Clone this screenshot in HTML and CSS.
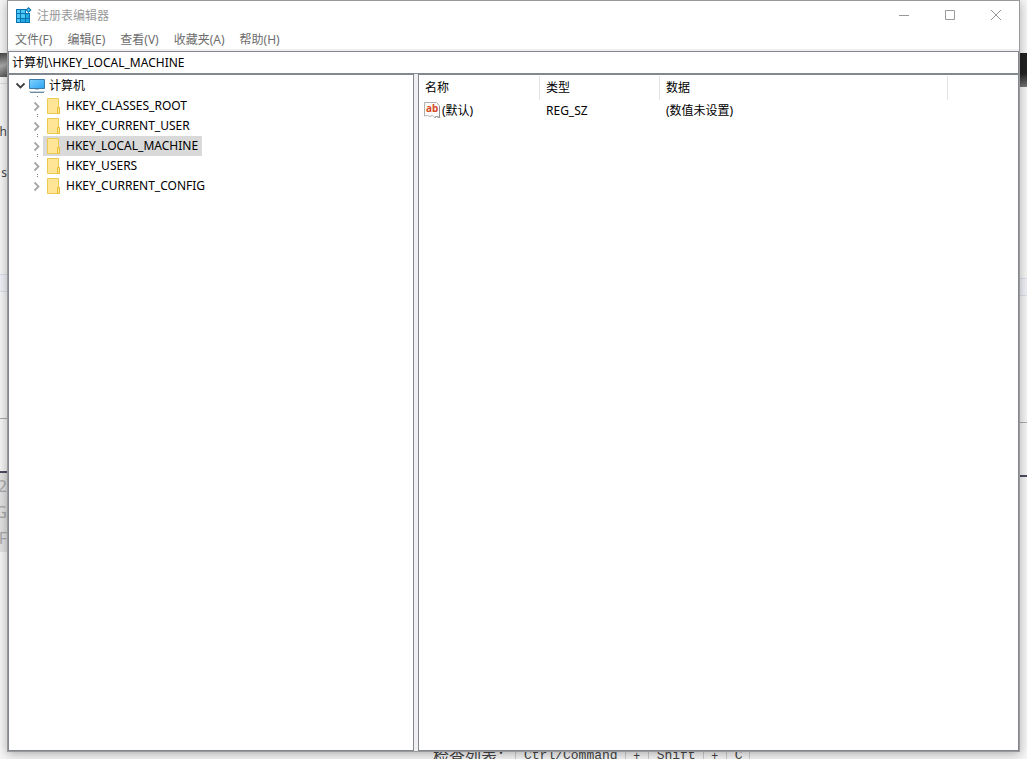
FILE: index.html
```html
<!DOCTYPE html>
<html lang="zh-CN">
<head>
    <meta charset="UTF-8">
    <meta name="viewport" content="width=device-width, initial-scale=1.0">
    <title>注册表编辑器</title>
    <link rel="stylesheet" href="styles.css">
</head>
<body>
    <div class="desktop">
        <div class="edge edge-left">
            <div class="photo"></div>
            <div class="page-top"></div>
            <div class="page-text"><span>.h</span><span>s</span></div>
            <div class="band"></div>
            <div class="page-gap"></div>
            <div class="page-foot"></div>
            <div class="lines"><span>2</span><span>G</span><span>FF</span></div>
        </div>

        <main class="window">
            <header class="titlebar">
                <svg class="app-icon" width="16" height="16" viewBox="0 0 16 16">
                    <path fill="#0873b0" d="M0 2h10v4h4v10H0z"/>
                    <path fill="#4cc8f5" d="M1 3h3v3H1zM5 3h4v3H5zM1 7h3v4H1zM5 7h4v4H5zM1 12h3v3H1z"/>
                    <path fill="#23a9e1" d="M10 7h3v4h-3zM5 12h4v3H5zM10 12h3v3h-3z"/>
                    <path fill="#0873b0" d="M12.500 0l3 3-3 3-3-3z"/>
                    <path fill="#4cc8f5" d="M12.500 1.500L14 3l-1.500 1.500L11 3z"/>
                </svg>
                <h1>注册表编辑器</h1>
                <div class="controls">
                    <button type="button" aria-label="最小化"><svg width="10" height="10"><path d="M0 5.500h10"/></svg></button>
                    <button type="button" aria-label="最大化"><svg width="10" height="10"><path d="M.5.5h9v9h-9z"/></svg></button>
                    <button type="button" aria-label="关闭"><svg width="10" height="10"><path d="M0 0l10 10M10 0L0 10"/></svg></button>
                </div>
            </header>

            <nav class="menu">
                <button type="button">文件(F)</button>
                <button type="button">编辑(E)</button>
                <button type="button">查看(V)</button>
                <button type="button">收藏夹(A)</button>
                <button type="button">帮助(H)</button>
            </nav>

            <input class="address" type="text" aria-label="地址" value="计算机\HKEY_LOCAL_MACHINE">

            <!-- 图标定义 -->
            <svg class="defs" width="0" height="0">
                <symbol id="closed" viewBox="0 0 14 20">
                    <path fill="none" stroke="#a6a6a6" stroke-width="1.800" d="M5.500 6.500l4 4-4 4"/>
                    <path fill="#777" d="M8 0h1v1H8zM8 18h1v1H8z"/>
                </symbol>
                <symbol id="closed-last" viewBox="0 0 14 20">
                    <path fill="none" stroke="#a6a6a6" stroke-width="1.800" d="M5.500 6.500l4 4-4 4"/>
                    <path fill="#777" d="M8 0h1v1H8z"/>
                </symbol>
                <symbol id="folder" viewBox="0 0 16 16">
                    <path fill="#ffe595" stroke="#ecc94f" d="M.5.5h11v9h1v6H.5z"/>
                    <path fill="#ffe595" stroke="#e8bd38" d="M10.500 9.500h2v6h-2z"/>
                </symbol>
            </svg>

            <div class="panes">
                <section class="tree">
                    <div class="row">
                        <button class="toggle" type="button" aria-label="折叠"><svg width="14" height="20" viewBox="0 0 14 20"><path fill="none" stroke="#404040" stroke-width="1.800" d="M3.500 7.500l4 4 4-4"/></svg></button>
                        <button class="key root" type="button">
                            <svg width="16" height="16" viewBox="0 0 16 16">
                                <defs><linearGradient id="screen" x2="1" y2="1"><stop stop-color="#83d3ff"/><stop offset="1" stop-color="#29a3f3"/></linearGradient></defs>
                                <path fill="url(#screen)" stroke="#3f7ca5" d="M.5 1.500h15v9H.5z"/>
                                <path fill="#b7c9d6" d="M6 11h4v1H6z"/>
                                <path fill="#6c8ba0" d="M1 14h14v1H1z"/>
                                <path fill="#c9d5dd" d="M0 13h16v1H0z"/>
                            </svg>
                            <span>计算机</span>
                        </button>
                    </div>
                    <ul class="keys">
                        <li class="row">
                            <button class="toggle" type="button" aria-label="展开"><svg width="14" height="20"><use href="#closed"/></svg></button>
                            <button class="key" type="button"><svg width="16" height="16"><use href="#folder"/></svg><span>HKEY_CLASSES_ROOT</span></button>
                        </li>
                        <li class="row">
                            <button class="toggle" type="button" aria-label="展开"><svg width="14" height="20"><use href="#closed"/></svg></button>
                            <button class="key" type="button"><svg width="16" height="16"><use href="#folder"/></svg><span>HKEY_CURRENT_USER</span></button>
                        </li>
                        <li class="row">
                            <button class="toggle" type="button" aria-label="展开"><svg width="14" height="20"><use href="#closed"/></svg></button>
                            <button class="key selected" type="button"><svg width="16" height="16"><use href="#folder"/></svg><span>HKEY_LOCAL_MACHINE</span></button>
                        </li>
                        <li class="row">
                            <button class="toggle" type="button" aria-label="展开"><svg width="14" height="20"><use href="#closed"/></svg></button>
                            <button class="key" type="button"><svg width="16" height="16"><use href="#folder"/></svg><span>HKEY_USERS</span></button>
                        </li>
                        <li class="row">
                            <button class="toggle" type="button" aria-label="展开"><svg width="14" height="20"><use href="#closed-last"/></svg></button>
                            <button class="key" type="button"><svg width="16" height="16"><use href="#folder"/></svg><span>HKEY_CURRENT_CONFIG</span></button>
                        </li>
                    </ul>
                </section>

                <section class="values">
                    <table>
                        <colgroup><col class="col-name"><col class="col-type"><col class="col-data"></colgroup>
                        <thead>
                            <tr><th>名称</th><th>类型</th><th>数据</th></tr>
                        </thead>
                        <tbody>
                            <tr>
                                <td>
                                    <div class="name">
                                        <svg width="16" height="16" viewBox="0 0 16 16">
                                            <path fill="#fafafa" stroke="#b0b0b0" d="M.5.5h12l3 3v12l-3-1-2 1-2-2-3 1-2-1-3 .5z"/>
                                            <path fill="none" stroke="#909090" d="M15.500 4v11.500l-3-1-2 1"/>
                                            <text class="ab" x="2" y="10">ab</text>
                                        </svg>
                                        (默认)
                                    </div>
                                </td>
                                <td>REG_SZ</td>
                                <td>(数值未设置)</td>
                            </tr>
                        </tbody>
                    </table>
                </section>
            </div>
        </main>

        <div class="edge edge-right">
            <div class="photo"></div>
            <div class="page-top"></div>
            <div class="band"></div>
            <div class="page-gap"></div>
            <div class="page-foot"></div>
        </div>

        <div class="edge-bottom">
            <span class="hint">检查列表：</span>
            <kbd>Ctrl/Command</kbd><span class="plus">+</span><kbd>Shift</kbd><span class="plus">+</span><kbd>C</kbd>
        </div>
    </div>
</body>
</html>
```

FILE: styles.css
```css
* {
    box-sizing: border-box;
}

body {
    margin: 0;
    font-family: "Noto Sans", "Noto Sans CJK SC", sans-serif;
    font-size: 12px;
    color: #000;
    overflow: hidden;
}

button,
input {
    font: inherit;
    color: inherit;
    border: none;
    background: none;
    padding: 0;
    margin: 0;
}

svg {
    display: block;
    flex: none;
}

.desktop {
    display: grid;
    grid-template-columns: 7px 1fr 7px;
    grid-template-rows: 1fr 7px;
    height: 100vh;
    background: #f6f6f6;
}

/* 窗口 */
.window {
    position: relative;
    z-index: 1;
    display: flex;
    flex-direction: column;
    min-width: 0;
    background: #fff;
    border: 1px solid #999;
    box-shadow: 0 2px 10px rgba(0, 0, 0, 0.3);
}

.titlebar {
    display: flex;
    align-items: center;
    height: 28px;
    padding-left: 8px;
    color: #999;
}

.titlebar h1 {
    flex: 1;
    margin: 0 0 0 5px;
    font-size: 12px;
    font-weight: normal;
}

.controls {
    display: flex;
}

.controls button {
    display: flex;
    align-items: center;
    justify-content: center;
    width: 46px;
    height: 28px;
}

.controls path {
    fill: none;
    stroke: #999;
}

.menu {
    display: flex;
    gap: 15px;
    height: 22px;
    padding-left: 7px;
    color: #6d6d6d;
    border-bottom: 2px solid #f0f0f0;
}

.address {
    width: 100%;
    height: 23px;
    padding: 0 3px 2px;
    border: 1px solid #828790;
}

.defs {
    position: absolute;
}

.panes {
    flex: 1;
    display: grid;
    grid-template-columns: 406px 1fr;
    gap: 4px;
    min-height: 0;
    background: #f0f0f0;
}

.tree,
.values {
    background: #fff;
    border: 1px solid #828790;
    padding-top: 1px;
    overflow: hidden;
}

/* 左侧树 */
.tree {
    padding-left: 4px;
}

.keys {
    list-style: none;
    margin: 0;
    padding: 0 0 0 16px;
}

.row {
    display: flex;
    height: 20px;
}

.key {
    display: flex;
    align-items: center;
    gap: 3px;
    height: 20px;
    padding: 0 4px;
}

.key span {
    padding-bottom: 2px;
}

.key.root {
    padding-left: 2px;
    gap: 4px;
}

.key.selected {
    background: #d9d9d9;
}

/* 右侧列表 */
table {
    table-layout: fixed;
    width: 529px;
    border-collapse: separate;
    border-spacing: 0;
}

.col-name {
    width: 121px;
}

.col-type {
    width: 120px;
}

.col-data {
    width: 288px;
}

th,
td {
    padding: 0 6px 2px;
    text-align: left;
    font-weight: normal;
}

th {
    height: 24px;
    border-right: 1px solid #e5e5e5;
}

td {
    height: 22px;
}

.name {
    display: flex;
    align-items: center;
    gap: 2px;
    margin-left: -1px;
}

.ab {
    font: bold 10px "Noto Sans", sans-serif;
    fill: #d64a26;
}

/* 窗口后面露出的网页 */
.edge {
    display: flex;
    flex-direction: column;
    overflow: hidden;
}

.photo {
    height: 24px;
    margin-top: 53px;
    background: linear-gradient(160deg, #444, #aaa 50%, #555);
}

.edge-right .photo {
    height: 34px;
    background: linear-gradient(#222 60%, #777);
}

.page-top {
    height: 7px;
    border-bottom: 1px solid #ddd;
}

.edge-right .page-top {
    height: 191px;
    border: none;
}

.page-text {
    display: flex;
    flex-direction: column;
    align-items: flex-end;
    height: 190px;
    padding-top: 27px;
    line-height: 41px;
    color: #444;
}

.band {
    height: 18px;
    background: #f0f2f8;
    border: solid #dcdfe9;
    border-width: 1px 0;
}

.page-gap {
    height: 127px;
    border-bottom: 1px solid #aaa;
}

.page-foot {
    height: 54px;
    border-bottom: 2px solid #4d4d66;
}

.lines {
    display: flex;
    flex-direction: column;
    align-items: flex-end;
    height: 79px;
    background: #e2e2e2;
    font-size: 16px;
    line-height: 26px;
    color: #aaa;
}

.edge-bottom {
    grid-column: 1 / 4;
    display: flex;
    align-items: center;
    height: 7px;
    padding-left: 433px;
    line-height: 20px;
    white-space: nowrap;
    color: #444;
}

.hint {
    width: 82px;
    font-size: 16px;
}

kbd {
    padding: 0 7px 0 8px;
    font-family: "Liberation Mono", monospace;
    font-size: 13px;
    border: solid #ccc;
    border-width: 0 1px;
}

.plus {
    width: 22px;
    text-align: center;
}
```
